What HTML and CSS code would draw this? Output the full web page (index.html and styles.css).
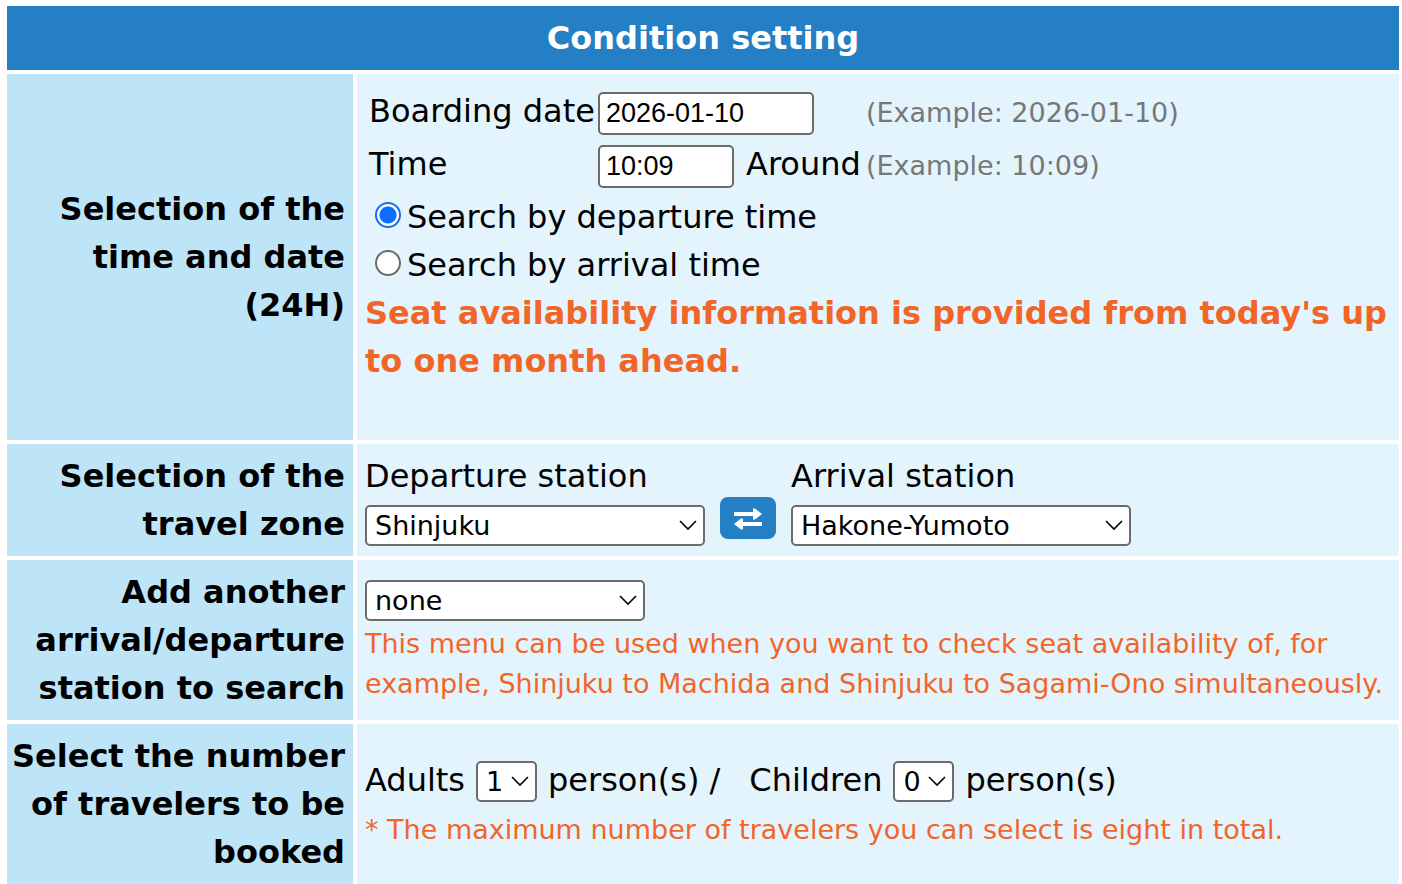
FILE: index.html
```html
<!DOCTYPE html>
<html lang="en">
<head>
    <meta charset="UTF-8">
    <meta name="viewport" content="width=device-width, initial-scale=1.0">
    <title>Condition setting</title>
    <link rel="stylesheet" href="styles.css">
</head>
<body>
    <form id="searchForm">
        <table class="conditions">
            <thead>
                <tr>
                    <th class="heading" colspan="2">Condition setting</th>
                </tr>
            </thead>
            <tbody>
                <tr>
                    <th class="name" scope="row">Selection of the time and date (24H)</th>
                    <td class="datetime">
                        <div class="fields">
                            <label for="boardingDate">Boarding date</label>
                            <div class="entry">
                                <input class="text date" id="boardingDate" type="text" value="2026-01-10">
                            </div>
                            <span class="example">(Example: 2026-01-10)</span>
                            <label for="boardingTime">Time</label>
                            <div class="entry">
                                <input class="text time" id="boardingTime" type="text" value="10:09">
                                <span>Around</span>
                            </div>
                            <span class="example">(Example: 10:09)</span>
                        </div>
                        <label class="option"><input type="radio" name="searchBy" value="departure" checked>Search by departure time</label>
                        <label class="option"><input type="radio" name="searchBy" value="arrival">Search by arrival time</label>
                        <p class="notice">Seat availability information is provided from today's up to one month ahead.</p>
                    </td>
                </tr>
                <tr>
                    <th class="name" scope="row">Selection of the travel zone</th>
                    <td>
                        <div class="zone">
                            <div class="station">
                                <label for="departure">Departure station</label>
                                <select id="departure">
                                    <option>Shinjuku</option>
                                    <option>Hakone-Yumoto</option>
                                </select>
                            </div>
                            <button class="swap" id="swap" type="button" aria-label="Swap stations">
                                <svg width="28" height="24" viewBox="0 0 28 24" fill="currentColor">
                                    <path d="M0 6h19V2.5h2L28 8l-7 5.500h-2V10H0z"/>
                                    <path d="M28 16H9v-3.500H7L0 18l7 5.500h2V20h19z"/>
                                </svg>
                            </button>
                            <div class="station">
                                <label for="arrival">Arrival station</label>
                                <select id="arrival">
                                    <option>Hakone-Yumoto</option>
                                    <option>Shinjuku</option>
                                </select>
                            </div>
                        </div>
                    </td>
                </tr>
                <tr>
                    <th class="name" scope="row"><label for="another">Add another arrival/departure station to search</label></th>
                    <td>
                        <select class="another" id="another">
                            <option>none</option>
                        </select>
                        <p class="note">This menu can be used when you want to check seat availability of, for example, Shinjuku to Machida and Shinjuku to Sagami-Ono simultaneously.</p>
                    </td>
                </tr>
                <tr>
                    <th class="name" scope="row">Select the number of travelers to be booked</th>
                    <td class="travelers">
                        <div class="people">
                            <label for="adults">Adults</label>
                            <select class="count" id="adults">
                                <option>1</option>
                                <option>2</option>
                            </select>
                            <span class="unit">person(s) /</span>
                            <label for="children">Children</label>
                            <select class="count" id="children">
                                <option>0</option>
                                <option>1</option>
                            </select>
                            <span>person(s)</span>
                        </div>
                        <p class="note">* The maximum number of travelers you can select is eight in total.</p>
                    </td>
                </tr>
            </tbody>
        </table>
    </form>

    <script>
        document.getElementById('swap').addEventListener('click', function() {
            const departure = document.getElementById('departure');
            const arrival = document.getElementById('arrival');
            const station = departure.value;
            departure.value = arrival.value;
            arrival.value = station;
        });
    </script>
</body>
</html>
```
FILE: styles.css
```css
* {
    box-sizing: border-box;
}

body {
    margin: 6px 3px 0 7px;
    background-color: white;
    color: black;
    font-family: Verdana, "DejaVu Sans", sans-serif;
    font-size: 32px;
    line-height: 48px;
}

p {
    margin: 0;
}

.conditions {
    width: 100%;
    border-spacing: 0;
}

.conditions th, .conditions td {
    padding: 8px;
}

.conditions .heading {
    background-color: #247fc4;
    color: white;
    text-align: center;
}

.conditions .name {
    width: 346px;
    padding-left: 2px;
    border-top: 4px solid white;
    background-color: #bee4f7;
    background-clip: padding-box;
    text-align: right;
}

.conditions td {
    border-top: 4px solid white;
    border-left: 4px solid white;
    background-color: #e3f4fd;
    background-clip: padding-box;
    vertical-align: top;
}

.conditions .datetime {
    padding: 16px 8px 55px;
}

.fields {
    display: grid;
    grid-template-columns: 229px 268px auto;
    row-gap: 8px;
    align-items: baseline;
    padding-left: 4px;
    margin-bottom: 5px;
    line-height: 43px;
}

.entry {
    display: flex;
    align-items: baseline;
    gap: 12px;
}

.text {
    height: 43px;
    padding: 0 6px;
    border: 2px solid #6b6b6b;
    border-radius: 5px;
    background-color: white;
    font-family: "Liberation Sans", Arial, sans-serif;
    font-size: 27px;
}

.date {
    width: 216px;
}

.time {
    width: 136px;
}

.example {
    color: #777777;
    font-size: 27px;
}

.option {
    display: flex;
    align-items: center;
    gap: 6px;
    padding-left: 10px;
}

.option input {
    appearance: none;
    width: 26px;
    height: 26px;
    margin: 0 0 4px;
    border: 2px solid #6b6b6b;
    border-radius: 50%;
    background-color: white;
}

.option input:checked {
    border-color: #1a6fee;
    background: radial-gradient(circle, #0d6efd 8px, white 9px);
}

.notice {
    color: #f26529;
    font-weight: bold;
}

.zone {
    display: flex;
    align-items: flex-end;
    gap: 15px;
}

.station {
    display: flex;
    flex-direction: column;
}

select {
    appearance: none;
    display: block;
    width: 340px;
    height: 41px;
    margin: 5px 0 2px;
    padding: 0 30px 0 8px;
    border: 2px solid #6b6b6b;
    border-radius: 5px;
    background: white url("data:image/svg+xml,%3Csvg xmlns='http://www.w3.org/2000/svg' width='18' height='12' fill='none' stroke='black' stroke-width='1.6'%3E%3Cpath d='M1 1l8 8 8-8'/%3E%3C/svg%3E") no-repeat right 6px center;
    color: black;
    font-family: inherit;
    font-size: 27px;
}

.swap {
    display: flex;
    align-items: center;
    justify-content: center;
    width: 56px;
    height: 42px;
    margin: 0 0 9px;
    padding: 0;
    border: none;
    border-radius: 8px;
    background-color: #247fc4;
    color: white;
    cursor: pointer;
}

.another {
    width: 280px;
    margin: 12px 0 3px;
}

.note {
    color: #f26529;
    font-size: 27px;
    line-height: 40px;
}

.conditions .travelers {
    padding-top: 32px;
}

.people {
    display: flex;
    align-items: baseline;
    gap: 11px;
    margin-bottom: 6px;
}

.count {
    width: 61px;
    margin: 0;
    padding-right: 24px;
}

.unit {
    margin-right: 18px;
}
```
